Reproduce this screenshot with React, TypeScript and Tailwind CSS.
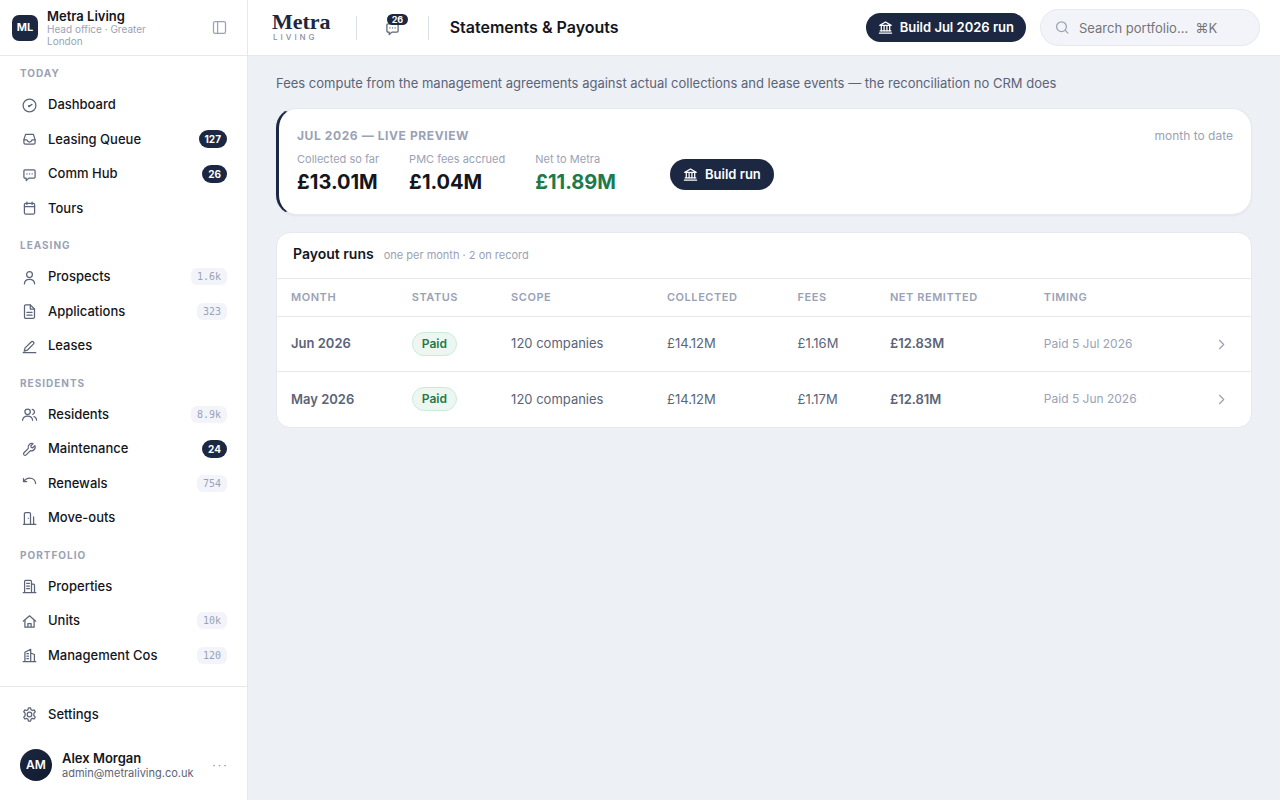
import type { ReactNode } from 'react'
import clsx from 'clsx'

type IconName =
  | 'gauge' | 'inbox' | 'chat' | 'calendar' | 'user' | 'doc' | 'pen' | 'users' | 'wrench'
  | 'renew' | 'moveout' | 'building' | 'home' | 'tower' | 'cog' | 'bank' | 'search' | 'panel'
  | 'chevron' | 'dots'

interface NavItem {
  label: string
  icon: IconName
  count?: string
  alert?: boolean
}

interface PayoutRun {
  month: string
  scope: string
  collected: string
  fees: string
  net: string
  timing: string
}

// ── Data ───────────────────────────────────────────────────────────────────
const NAV: { title: string; items: NavItem[] }[] = [
  {
    title: 'Today',
    items: [
      { label: 'Dashboard', icon: 'gauge' },
      { label: 'Leasing Queue', icon: 'inbox', count: '127', alert: true },
      { label: 'Comm Hub', icon: 'chat', count: '26', alert: true },
      { label: 'Tours', icon: 'calendar' },
    ],
  },
  {
    title: 'Leasing',
    items: [
      { label: 'Prospects', icon: 'user', count: '1.6k' },
      { label: 'Applications', icon: 'doc', count: '323' },
      { label: 'Leases', icon: 'pen' },
    ],
  },
  {
    title: 'Residents',
    items: [
      { label: 'Residents', icon: 'users', count: '8.9k' },
      { label: 'Maintenance', icon: 'wrench', count: '24', alert: true },
      { label: 'Renewals', icon: 'renew', count: '754' },
      { label: 'Move-outs', icon: 'moveout' },
    ],
  },
  {
    title: 'Portfolio',
    items: [
      { label: 'Properties', icon: 'building' },
      { label: 'Units', icon: 'home', count: '10k' },
      { label: 'Management Cos', icon: 'tower', count: '120' },
    ],
  },
]

const STATS = [
  { label: 'Collected so far', value: '£13.01M' },
  { label: 'PMC fees accrued', value: '£1.04M' },
  { label: 'Net to Metra', value: '£11.89M', positive: true },
]

const RUNS: PayoutRun[] = [
  { month: 'Jun 2026', scope: '120 companies', collected: '£14.12M', fees: '£1.16M', net: '£12.83M', timing: 'Paid 5 Jul 2026' },
  { month: 'May 2026', scope: '120 companies', collected: '£14.12M', fees: '£1.17M', net: '£12.81M', timing: 'Paid 5 Jun 2026' },
]

const COLUMNS = [
  { label: 'Month', width: 'w-[12.4%]' },
  { label: 'Status', width: 'w-[10.2%]' },
  { label: 'Scope', width: 'w-[16%]' },
  { label: 'Collected', width: 'w-[13.4%]' },
  { label: 'Fees', width: 'w-[9.5%]' },
  { label: 'Net remitted', width: 'w-[15.8%]' },
  { label: 'Timing', width: 'w-[16.8%]' },
]

// ── Icons ──────────────────────────────────────────────────────────────────
const ICONS: Record<IconName, ReactNode> = {
  gauge: (
    <>
      <circle cx="7.5" cy="7.5" r="6.4" />
      <path d="M7.2 8.2 10 6.4" />
      <circle cx="7.1" cy="8.1" r=".6" />
    </>
  ),
  inbox: (
    <>
      <path d="M3.6 2.4h7.8l1.7 5.2v3.2a1.4 1.4 0 0 1-1.4 1.4H3.3a1.4 1.4 0 0 1-1.4-1.4V7.6z" />
      <path d="M1.9 7.8h2.7c.3 0 .5.2.6.5.3 1 1.2 1.7 2.3 1.7s2-.7 2.3-1.7c.1-.3.3-.5.6-.5h2.7" />
    </>
  ),
  chat: (
    <>
      <path d="M3 2.9h9A1.1 1.1 0 0 1 13.1 4v6a1.1 1.1 0 0 1-1.1 1.1H6.9L4.2 13.5v-2.4H3A1.1 1.1 0 0 1 1.9 10V4A1.1 1.1 0 0 1 3 2.9z" />
      <path d="M4.9 6.9h.1M7.5 6.9h.1M10.1 6.9h.1" />
    </>
  ),
  calendar: (
    <>
      <rect x="2.4" y="2.4" width="10.2" height="10.6" rx="1.2" />
      <path d="M2.4 5.5h10.2M4.9 1.2v2.2M10.1 1.2v2.2" />
    </>
  ),
  user: (
    <>
      <circle cx="7.5" cy="4.6" r="2.9" />
      <path d="M2.4 13.9c.2-2.8 2.3-4.5 5.1-4.5s4.9 1.7 5.1 4.5" />
    </>
  ),
  doc: (
    <>
      <path d="M8.3.9H3.7A1.2 1.2 0 0 0 2.5 2.1v11a1.2 1.2 0 0 0 1.2 1.2h7.6a1.2 1.2 0 0 0 1.2-1.2V5z" />
      <path d="M8.3.9V5h4.2M4.9 8.3h5.2M4.9 11.1h5.2" />
    </>
  ),
  pen: (
    <>
      <path d="M2.2 12.2l.9-3.3 6.3-6.2a1.2 1.2 0 0 1 1.7 0l.5.5a1.2 1.2 0 0 1 0 1.7l-6.3 6.3z" />
      <path d="M1.2 13.7h12.6" />
    </>
  ),
  users: (
    <>
      <circle cx="5.6" cy="4.8" r="2.7" />
      <path d="M.6 13.3c.2-2.7 2.2-4.2 5-4.2s4.8 1.5 5 4.2" />
      <path d="M10.2 2.3a2.6 2.6 0 0 1 .6 5M12 9.5c1.6.6 2.5 1.9 2.7 3.8" />
    </>
  ),
  wrench: (
    <path d="M12.9 3.6l-2.2 2.2-1.5-.4-.4-1.5L11 1.7a3.7 3.7 0 0 0-4.7 4.7L2 10.7a1.6 1.6 0 0 0 0 2.2 1.6 1.6 0 0 0 2.2 0l4.3-4.3a3.7 3.7 0 0 0 4.4-5z" />
  ),
  renew: <path d="M2 5.4C3.1 3.3 5.2 2 7.7 2c3.4 0 5.8 2.4 5.9 5.6M1.5 2.6v3h3.2" />,
  moveout: (
    <>
      <path d="M2.4 13.4V2.7a1.2 1.2 0 0 1 1.2-1.2h3.7a1.2 1.2 0 0 1 1.2 1.2v10.7M1.5 13.4h12.3M11.6 13.4V5.8" />
      <path d="M6.2 7.3h.1" />
    </>
  ),
  building: (
    <>
      <path d="M2.6 13.6V2.4a1 1 0 0 1 1-1h4.9a1 1 0 0 1 1 1v11.2M9.5 5.2h2a1 1 0 0 1 1 1v7.4M1.2 13.6h12.7" />
      <path d="M4.7 4.3h2.8M4.7 7h2.8M4.7 9.7h2.8" />
    </>
  ),
  home: (
    <>
      <path d="M1.3 7.2l6.2-5.4 6.2 5.4" />
      <path d="M2.9 6.3v6.9h9.2V6.3M5.9 13.2V9.5h3.2v3.7" />
    </>
  ),
  tower: (
    <>
      <path d="M2.9 13.7V4.3l5.8-3v12.4M8.7 5l3.7 1.5v7.2M1.2 13.7h12.6" />
      <path d="M4.9 5.7h1.5M4.9 8.2h1.5M4.9 10.7h1.5" />
    </>
  ),
  cog: (
    <>
      <circle cx="7.5" cy="7.5" r="2.3" />
      <path d="M6.4.9h2.2l.4 1.8 1.3.8 1.8-.6 1.2 1.9-1.4 1.3v2.7l1.4 1.3-1.2 1.9-1.8-.6-1.3.8-.4 1.9H6.4L6 12.2l-1.3-.8-1.8.6-1.2-1.9 1.4-1.3V6.1L1.7 4.8l1.2-1.9 1.8.6L6 2.7z" />
    </>
  ),
  bank: (
    <>
      <path d="M1.8 5.4 7.5 2l5.7 3.4zM3.3 5.4v5.4M6.1 5.4v5.4M8.9 5.4v5.4M11.7 5.4v5.4" />
      <path d="M2.2 10.9h10.6M1.4 13.2h12.2" />
    </>
  ),
  search: (
    <>
      <circle cx="6.5" cy="6.7" r="4.9" />
      <path d="M10.2 10.4l2.7 2.7" />
    </>
  ),
  panel: (
    <>
      <rect x="1.5" y="1.7" width="12" height="11.6" rx="1.6" />
      <path d="M5.6 1.7v11.6" />
    </>
  ),
  chevron: <path d="M5.5 3.3l4.2 4.2-4.2 4.2" />,
  dots: <path d="M2 7.5h.1M7.5 7.5h.1M13 7.5h.1" strokeWidth="1.7" />,
}

function Icon({ name, className }: { name: IconName; className?: string }) {
  return (
    <svg
      viewBox="0 0 15 15"
      fill="none"
      stroke="currentColor"
      strokeWidth="1.25"
      strokeLinecap="round"
      strokeLinejoin="round"
      aria-hidden="true"
      className={clsx('size-[15px] shrink-0', className)}
    >
      {ICONS[name]}
    </svg>
  )
}

// ── Sidebar ────────────────────────────────────────────────────────────────
function NavLink({ item }: { item: NavItem }) {
  return (
    <a href="#" className="flex items-center gap-[11px] py-[7px] pl-[10px] pr-2 text-[13px] font-medium leading-normal text-[#14161c]">
      <Icon name={item.icon} className="mt-px text-[#5b6478]" />
      <span className="flex-1 truncate">{item.label}</span>
      {item.count && (
        <span
          className={clsx(
            'px-[6px] text-[10px]',
            item.alert
              ? 'rounded-full bg-[#1c2841] font-bold leading-[18px] text-white'
              : "rounded-[6px] bg-[#f3f4f9] font-['DejaVu_Sans_Mono',monospace] font-normal leading-[17px] text-[#9aa2b5]",
          )}
        >
          {item.count}
        </span>
      )}
    </a>
  )
}

function Sidebar() {
  return (
    <aside className="sticky top-0 flex h-screen w-[248px] shrink-0 flex-col border-r border-[#e6e8f0] bg-white">
      <div className="flex h-14 shrink-0 items-center gap-[9px] border-b border-[#e6e8f0] pl-3 pr-5">
        <span className="flex size-[26px] shrink-0 items-center justify-center rounded-[7px] bg-[#1c2841] text-[11px] font-bold text-white">
          ML
        </span>
        <div className="w-[120px]">
          <p className="text-[13px] font-semibold leading-[14px] text-[#14161c]">Metra Living</p>
          <p className="text-[10px] leading-3 text-[#9aa2b5]">Head office · Greater London</p>
        </div>
        <button type="button" aria-label="Collapse sidebar" className="ml-auto text-[#9aa2b5]">
          <Icon name="panel" />
        </button>
      </div>

      <nav className="flex-1 overflow-hidden px-3 pt-[9px]">
        {NAV.map(group => (
          <section key={group.title} className="mb-3">
            <h2 className="mb-[7px] px-2 text-[10px] font-bold uppercase leading-4 tracking-widest text-[#9aa2b5]">
              {group.title}
            </h2>
            <div className="flex flex-col gap-px">
              {group.items.map(item => <NavLink key={item.label} item={item} />)}
            </div>
          </section>
        ))}
      </nav>

      <div className="shrink-0 border-t border-[#e6e8f0] px-3 pb-[19px] pt-[11px]">
        <NavLink item={{ label: 'Settings', icon: 'cog' }} />
        <div className="mt-[18px] flex items-center gap-[10px] px-2">
          <span className="flex size-8 shrink-0 items-center justify-center rounded-full bg-linear-to-br from-[#1c2841] to-[#101b30] text-[12px] font-semibold text-white">
            AM
          </span>
          <div className="min-w-0 flex-1">
            <p className="text-[13px] font-semibold leading-[15px] text-[#14161c]">Alex Morgan</p>
            <p className="text-[11px] leading-[14px] text-[#5b6478]">admin@metraliving.co.uk</p>
          </div>
          <button type="button" aria-label="Account menu" className="text-[#9aa2b5]">
            <Icon name="dots" />
          </button>
        </div>
      </div>
    </aside>
  )
}

// ── Top bar ────────────────────────────────────────────────────────────────
function TopBar() {
  return (
    <header className="flex h-14 items-center border-b border-[#e6e8f0] bg-white pl-6 pr-5">
      <div className="mr-[25px] pb-1">
        <p className="font-['Liberation_Serif',serif] text-[22px] font-bold leading-[22px] text-[#1c2841]">Metra</p>
        <p className="pl-px text-[8px] font-medium uppercase leading-2 tracking-[3px] text-[#8890a3]">Living</p>
      </div>
      <div className="h-6 w-px bg-[#dcdfe9]" />
      <button type="button" aria-label="Messages, 26 unread" className="relative mx-7 pt-px text-[#5b6478]">
        <Icon name="chat" className="size-4" />
        <span className="absolute -top-[6px] left-[2px] rounded-full bg-[#1c2841] px-[5px] text-[9px] font-bold leading-[11px] text-white">
          26
        </span>
      </button>
      <div className="h-6 w-px bg-[#dcdfe9]" />
      <h1 className="ml-[21px] pb-px text-[16px] font-semibold text-[#14161c]">Statements &amp; Payouts</h1>

      <button
        type="button"
        className="ml-auto flex items-center gap-[7px] rounded-full bg-[#1c2841] px-3 text-[13px] font-semibold leading-[29px] text-white"
      >
        <Icon name="bank" />
        Build Jul 2026 run
      </button>
      <label className="ml-[14px] flex h-[37px] w-[220px] items-center gap-[9px] rounded-full border border-[#e6e8f0] bg-[#f3f4f9] px-[14px]">
        <Icon name="search" className="text-[#9aa2b5]" />
        <input
          type="text"
          aria-label="Search portfolio"
          placeholder="Search portfolio…  ⌘K"
          className="h-full w-full min-w-0 whitespace-pre bg-transparent text-[13px] outline-none placeholder:text-[#757575]"
        />
      </label>
    </header>
  )
}

// ── Content ────────────────────────────────────────────────────────────────
function LivePreview() {
  return (
    <section className="mt-[15px] rounded-[20px] border border-l-3 border-[#e6e8f0] border-l-[#1c2841] bg-white px-[18px] pb-[17px] pt-[18px] shadow-[0_1px_2px_rgba(20,30,60,0.05)]">
      <div className="flex items-center justify-between leading-[18px]">
        <h2 className="text-[12px] font-bold uppercase tracking-wider text-[#9aa2b5]">Jul 2026 — Live preview</h2>
        <span className="text-[12px] text-[#9aa2b5]">month to date</span>
      </div>
      <div className="mt-[6px] flex items-center gap-[54px]">
        <dl className="flex gap-[30px]">
          {STATS.map(stat => (
            <div key={stat.label}>
              <dt className="text-[11px] leading-[17px] text-[#9aa2b5]">{stat.label}</dt>
              <dd className={clsx('text-[20px] font-bold leading-[29px]', stat.positive ? 'text-[#1d7a4b]' : 'text-[#14161c]')}>
                {stat.value}
              </dd>
            </div>
          ))}
        </dl>
        <button
          type="button"
          className="flex items-center gap-[7px] rounded-full bg-[#1c2841] px-[13px] text-[13px] font-semibold leading-[31px] text-white"
        >
          <Icon name="bank" />
          Build run
        </button>
      </div>
    </section>
  )
}

function PayoutRuns() {
  return (
    <section className="mt-[17px] overflow-hidden rounded-[14px] border border-[#e6e8f0] bg-white">
      <div className="flex items-baseline gap-[10px] px-4 pb-[13px] pt-[11px] leading-5">
        <h2 className="text-[14px] font-semibold text-[#14161c]">Payout runs</h2>
        <span className="text-[11px] text-[#9aa2b5]">one per month · 2 on record</span>
      </div>
      <table className="w-full table-fixed text-left text-[13px] text-[#5b6478]">
        <thead>
          <tr className="h-[38px] border-y border-[#e6e8f0]">
            {COLUMNS.map(col => (
              <th key={col.label} scope="col" className={clsx('px-[14px] text-[11px] font-semibold uppercase tracking-wider text-[#9aa2b5]', col.width)}>
                {col.label}
              </th>
            ))}
            <th aria-label="Open" />
          </tr>
        </thead>
        <tbody>
          {RUNS.map(run => (
            <tr key={run.month} className="h-[55px] border-b border-[#e6e8f0] last:border-b-0">
              <td className="px-[14px] font-semibold">{run.month}</td>
              <td className="px-[14px]">
                <span className="inline-block rounded-full border border-[#c9ecd9] bg-[#edf6f1] px-[9px] text-[12px] font-semibold leading-[22px] text-[#1d7a4b]">
                  Paid
                </span>
              </td>
              <td className="px-[14px]">{run.scope}</td>
              <td className="px-[14px]">{run.collected}</td>
              <td className="px-[14px]">{run.fees}</td>
              <td className="px-[14px] font-semibold">{run.net}</td>
              <td className="px-[14px] text-[12px] text-[#9aa2b5]">{run.timing}</td>
              <td className="pr-[22px]">
                <Icon name="chevron" className="ml-auto text-[#9aa2b5]" />
              </td>
            </tr>
          ))}
        </tbody>
      </table>
    </section>
  )
}

export default function App() {
  return (
    <div className="flex min-h-screen bg-[#edf0f5] font-['Inter',sans-serif]">
      <Sidebar />
      <div className="min-w-0 flex-1">
        <TopBar />
        <main className="px-7 pt-[18px]">
          <p className="text-[13px] leading-[19px] text-[#5b6478]">
            Fees compute from the management agreements against actual collections and lease events — the reconciliation no CRM does
          </p>
          <LivePreview />
          <PayoutRuns />
        </main>
      </div>
    </div>
  )
}
